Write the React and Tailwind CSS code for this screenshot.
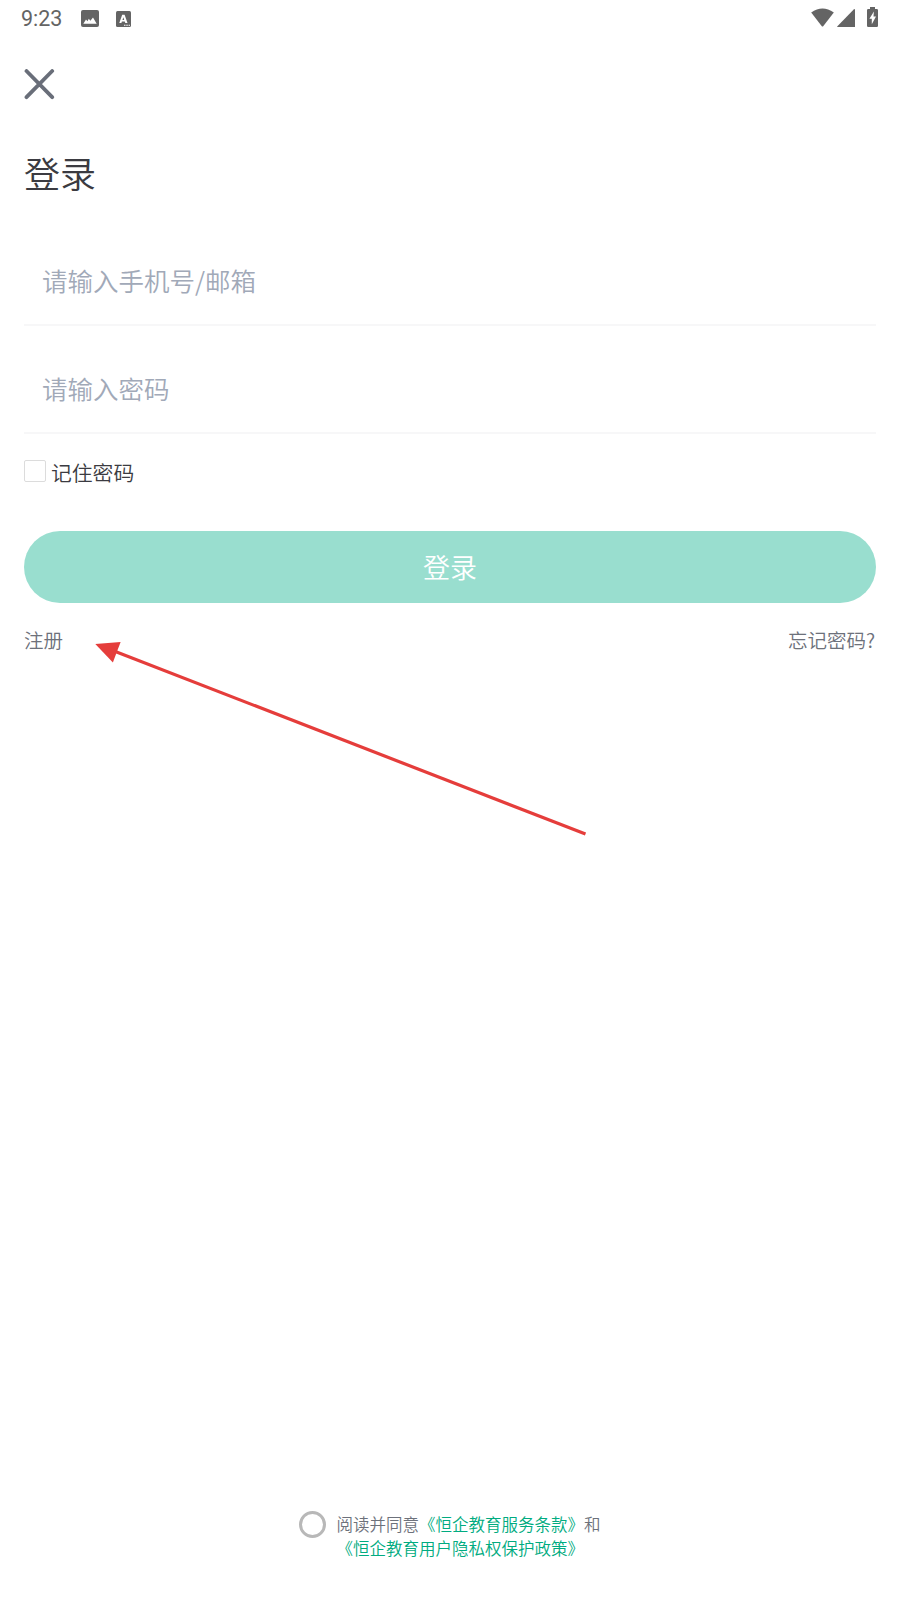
const StatusBar = () => (
  <header className="flex h-[37px] items-center justify-between pl-[21px] pr-[22px] text-[#646464]">
    <div className="flex items-center">
      <span className="w-[60px] font-['Roboto',sans-serif] text-[21.5px] font-[450] leading-[38px]">9:23</span>
      <svg className="h-[17px] w-[18px]" viewBox="0 0 18 17">
        <rect width="18" height="17" rx="2" fill="currentColor" />
        <path d="M2.3 13.7 L5 9.5 L6.5 11.2 L7.8 8.8 L9.4 10.8 L12 7.6 L15.7 13.7 Z" fill="#fff" />
      </svg>
      <svg className="ml-[17px] h-4 w-[15px]" viewBox="0 0 15 16">
        <rect width="15" height="16" rx="1.5" fill="currentColor" />
        <path fillRule="evenodd" d="M6.2 3.8 H8.6 L11.5 12 H9.3 L8.8 10.5 H5.9 L5.4 12 H3.3 Z M7.35 6.2 L6.5 8.9 H8.2 Z" fill="#fff" />
        <path d="M8 14.2 H9.5 M10.3 14.2 H11.8 M12.6 14.2 H14" stroke="#fff" strokeWidth="1.1" />
      </svg>
    </div>
    <div className="flex items-center pb-[3px]">
      <svg className="h-[19px] w-[23px]" viewBox="0 0 23 19">
        <path d="M0.2 4.4 Q11.5 -3.4 22.8 4.4 L12.2 18.2 Q11.5 18.8 10.8 18.2 Z" fill="currentColor" />
      </svg>
      <svg className="ml-[3px] mt-px h-[18px] w-[19px]" viewBox="0 0 19 18">
        <path d="M17.5 0 Q18 0 18 0.7 V18 H0.8 Q-0.2 18 0.4 17.2 L16.7 0.4 Z" fill="currentColor" />
      </svg>
      <svg className="ml-[11px] h-[20px] w-[11px]" viewBox="0 0 11 20">
        <path d="M3 0 H8 V2 H9.8 Q11 2 11 3.2 V18.8 Q11 20 9.8 20 H1.2 Q0 20 0 18.8 V3.2 Q0 2 1.2 2 H3 Z" fill="currentColor" />
        <path d="M6.9 4.5 L2.4 11.7 H4.8 V17.2 L9 9.5 H6.5 Z" fill="#fff" />
      </svg>
    </div>
  </header>
);

const Field = ({ label }) => (
  <div className="flex h-[108px] flex-col justify-end border-b-2 border-[#f7f7f8] pb-[26px] pl-[18px]">
    <span className="text-[25.5px] leading-[36px] text-[#a1a9b8]">{label}</span>
  </div>
);

export default function App() {
  return (
    <div className="relative flex h-[1600px] w-[900px] flex-col bg-white font-['Noto_Sans_CJK_SC',sans-serif] font-[350]">
      <StatusBar />
      <main className="flex flex-1 flex-col px-6">
        <button className="mt-8 h-[31px] w-[31px]" aria-label="关闭">
          <svg className="h-[31px] w-[31px]" viewBox="0 0 31 31">
            <path d="M2.5 2 L28.2 28.2 M28.2 2 L2.5 28.2" stroke="#696e79" strokeWidth="3.8" strokeLinecap="round" />
          </svg>
        </button>
        <h1 className="mt-[46px] text-[36px] font-[350] leading-[52px] text-[#3b3b41]">登录</h1>
        <div className="mt-[20px]">
          <Field label="请输入手机号/邮箱" />
          <Field label="请输入密码" />
        </div>
        <label className="mt-[22px] flex h-[32px] items-center">
          <span className="mb-[2px] h-[22px] w-[22px] rounded-[2px] border border-[#dcdcdc] bg-white" />
          <span className="ml-[5px] text-[20.8px] leading-[32px] text-[#3b3b41]">记住密码</span>
        </label>
        <button className="mt-[43px] flex h-[72px] items-center justify-center rounded-full bg-[#99decf] text-[27px] text-white">
          登录
        </button>
        <div className="mt-[22px] flex justify-between pr-px text-[19.5px] leading-[30px] text-[#6d717b]">
          <span>注册</span>
          <span>忘记密码?</span>
        </div>
        <div className="mt-auto mb-[40px] flex items-start pl-[275px]">
          <span className="-mt-px h-[27px] w-[27px] rounded-full border-[3px] border-[#b8b8b8]" />
          <p className="ml-[10.5px] whitespace-nowrap text-[16.5px] leading-[24px] text-[#6d717b]">
            阅读并同意<span className="text-[#00ab80]">《恒企教育服务条款》</span>和
            <br />
            <span className="text-[#00ab80]">《恒企教育用户隐私权保护政策》</span>
          </p>
        </div>
      </main>
      <svg className="pointer-events-none absolute left-[90px] top-[636px] h-[205px] w-[500px]" viewBox="90 636 500 205">
        <path d="M114 651 L585.5 834" stroke="#e53d3b" strokeWidth="3.2" />
        <path d="M95.3 644 L120.6 642 L112.9 662.6 Z" fill="#e53d3b" />
      </svg>
    </div>
  );
}
